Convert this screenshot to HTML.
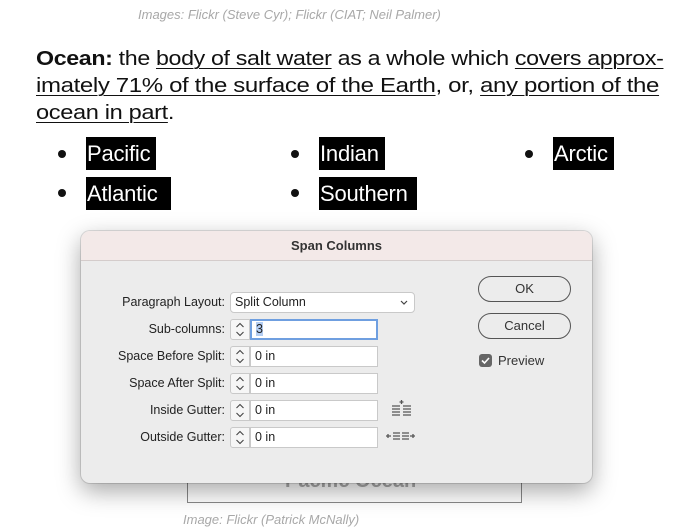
<!DOCTYPE html>
<html><head><style>
*{margin:0;padding:0;box-sizing:border-box}
body{width:690px;height:530px;background:#fff;position:relative;overflow:hidden;font-family:"Liberation Sans",sans-serif;color:#111}
.abs{position:absolute;white-space:nowrap}
.cap{color:#a8a8a8;font-size:13px;font-style:italic}
.line{font-size:20px;left:36px;letter-spacing:-0.3px;transform-origin:0 0}
u{text-decoration:underline;text-underline-offset:3px;text-decoration-thickness:1px}
.hl{position:absolute;background:#000;color:#fff;font-size:22px;padding:4px 0 0 1px;height:33px;letter-spacing:-0.2px;white-space:nowrap;overflow:hidden}
.dot{position:absolute;width:8px;height:8px;border-radius:50%;background:#111}
.dlg{position:absolute;left:81px;top:231px;width:511px;height:252px;background:#ececec;border-radius:9px;box-shadow:0 8px 24px rgba(0,0,0,.35),0 0 0 1px rgba(0,0,0,.12);overflow:hidden}
.tb{height:30px;background:#f3e9e8;border-bottom:1px solid #d4cccb;text-align:center;font-weight:bold;font-size:13px;line-height:29px;color:#333}
.lbl{position:absolute;right:367px;font-size:12.5px;color:#222;text-align:right}
.inp{position:absolute;background:#fff;border:1px solid #c9c9c9;height:21px;font-size:12.5px;line-height:19px;padding-left:4px;color:#222}
.spin{position:absolute;left:149px;width:20px;height:21px;border:1px solid #c9c9c9;border-radius:3px 0 0 3px;background:#f6f6f6}
.btn{position:absolute;left:397px;width:93px;height:26px;border:1.5px solid #555;border-radius:13px;text-align:center;font-size:13px;line-height:23px;color:#333}
</style></head><body>
<div class="abs cap" style="left:138px;top:7px">Images: Flickr (Steve Cyr); Flickr (CIAT; Neil Palmer)</div>
<div class="abs line" style="top:48px;transform:scaleX(1.16)"><b>Ocean:</b> the <u>body of salt water</u> as a whole which <u>covers approx-</u></div>
<div class="abs line" style="top:75px;transform:scaleX(1.2)"><u>imately 71% of the surface of the Earth</u>, or, <u>any portion of the </u></div>
<div class="abs line" style="top:102px;transform:scaleX(1.18)"><u>ocean in part</u>.</div>
<div class="dot" style="left:58px;top:150px"></div><div class="dot" style="left:291px;top:150px"></div><div class="dot" style="left:525px;top:150px"></div>
<div class="dot" style="left:58px;top:189px"></div><div class="dot" style="left:291px;top:189px"></div>
<div class="hl" style="left:86px;top:137px;width:70px">Pacific</div>
<div class="hl" style="left:86px;top:177px;width:85px">Atlantic</div>
<div class="hl" style="left:319px;top:137px;width:66px">Indian</div>
<div class="hl" style="left:319px;top:177px;width:98px">Southern</div>
<div class="hl" style="left:553px;top:137px;width:61px">Arctic</div>
<div style="position:absolute;left:187px;top:466px;width:335px;height:37px;border:1px solid #888;border-top:none"></div>
<div class="abs" style="left:285px;top:470px;font-size:20px;font-weight:bold;color:#aaa">Pacific Ocean</div>
<div class="abs cap" style="left:183px;top:512px">Image: Flickr (Patrick McNally)</div>
<div class="dlg">
<div class="tb">Span Columns</div>
<div class="lbl" style="top:64px">Paragraph Layout:</div>
<div class="inp" style="left:149px;top:61px;width:185px;border-radius:4px">Split Column<svg style="position:absolute;right:6px;top:7px" width="8" height="6" fill="none" stroke="#444" stroke-width="1.2"><path d="M1 1l3 3 3-3"/></svg></div>
<div class="lbl" style="top:91px">Sub-columns:</div>
<div class="inp" style="left:169px;top:88px;width:128px;border:2px solid #6f9fe0;line-height:17px"><span style="background:#b3cdf2">3</span></div>
<div class="lbl" style="top:118px">Space Before Split:</div>
<div class="inp" style="left:169px;top:115px;width:128px">0 in</div>
<div class="lbl" style="top:145px">Space After Split:</div>
<div class="inp" style="left:169px;top:142px;width:128px">0 in</div>
<div class="lbl" style="top:172px">Inside Gutter:</div>
<div class="inp" style="left:169px;top:169px;width:128px">0 in</div>
<div class="lbl" style="top:199px">Outside Gutter:</div>
<div class="inp" style="left:169px;top:196px;width:128px">0 in</div>
<div class="spin" style="top:88px"></div><div class="spin" style="top:115px"></div><div class="spin" style="top:142px"></div><div class="spin" style="top:169px"></div><div class="spin" style="top:196px"></div>
<svg style="position:absolute;left:149px;top:88px" width="20" height="130" fill="none" stroke="#444" stroke-width="1.1">
<path d="M6.5 8l3.5-3.5 3.5 3.5M6.5 13l3.5 3.5 3.5-3.5"/>
<path transform="translate(0,27)" d="M6.5 8l3.5-3.5 3.5 3.5M6.5 13l3.5 3.5 3.5-3.5"/>
<path transform="translate(0,54)" d="M6.5 8l3.5-3.5 3.5 3.5M6.5 13l3.5 3.5 3.5-3.5"/>
<path transform="translate(0,81)" d="M6.5 8l3.5-3.5 3.5 3.5M6.5 13l3.5 3.5 3.5-3.5"/>
<path transform="translate(0,108)" d="M6.5 8l3.5-3.5 3.5 3.5M6.5 13l3.5 3.5 3.5-3.5"/>
</svg>
<svg style="position:absolute;left:309px;top:168px" width="24" height="20" stroke="#555" stroke-width="1.3"><path d="M2 7h8M2 10h8M2 13h8M2 16h8M13 7h8M13 10h8M13 13h8M13 16h8M11.5 1v4M9.5 3h4"/></svg>
<svg style="position:absolute;left:303px;top:195px" width="34" height="20" stroke="#555" stroke-width="1.3"><path d="M9 7h7M9 10h7M9 13h7M18 7h7M18 10h7M18 13h7M2 10h5M26 10h5M4 8v4M29 8v4"/></svg>
<div class="btn" style="top:45px">OK</div>
<div class="btn" style="top:82px;border-width:1px">Cancel</div>
<div style="position:absolute;left:398px;top:123px;width:13px;height:13px;background:#666;border-radius:3px"><svg width="13" height="13" fill="none" stroke="#fff" stroke-width="1.6"><path d="M3 6.5l2.5 2.5 4.5-5"/></svg></div>
<div class="abs" style="left:417px;top:122px;font-size:13px;color:#333">Preview</div>
</div>
</body></html>
